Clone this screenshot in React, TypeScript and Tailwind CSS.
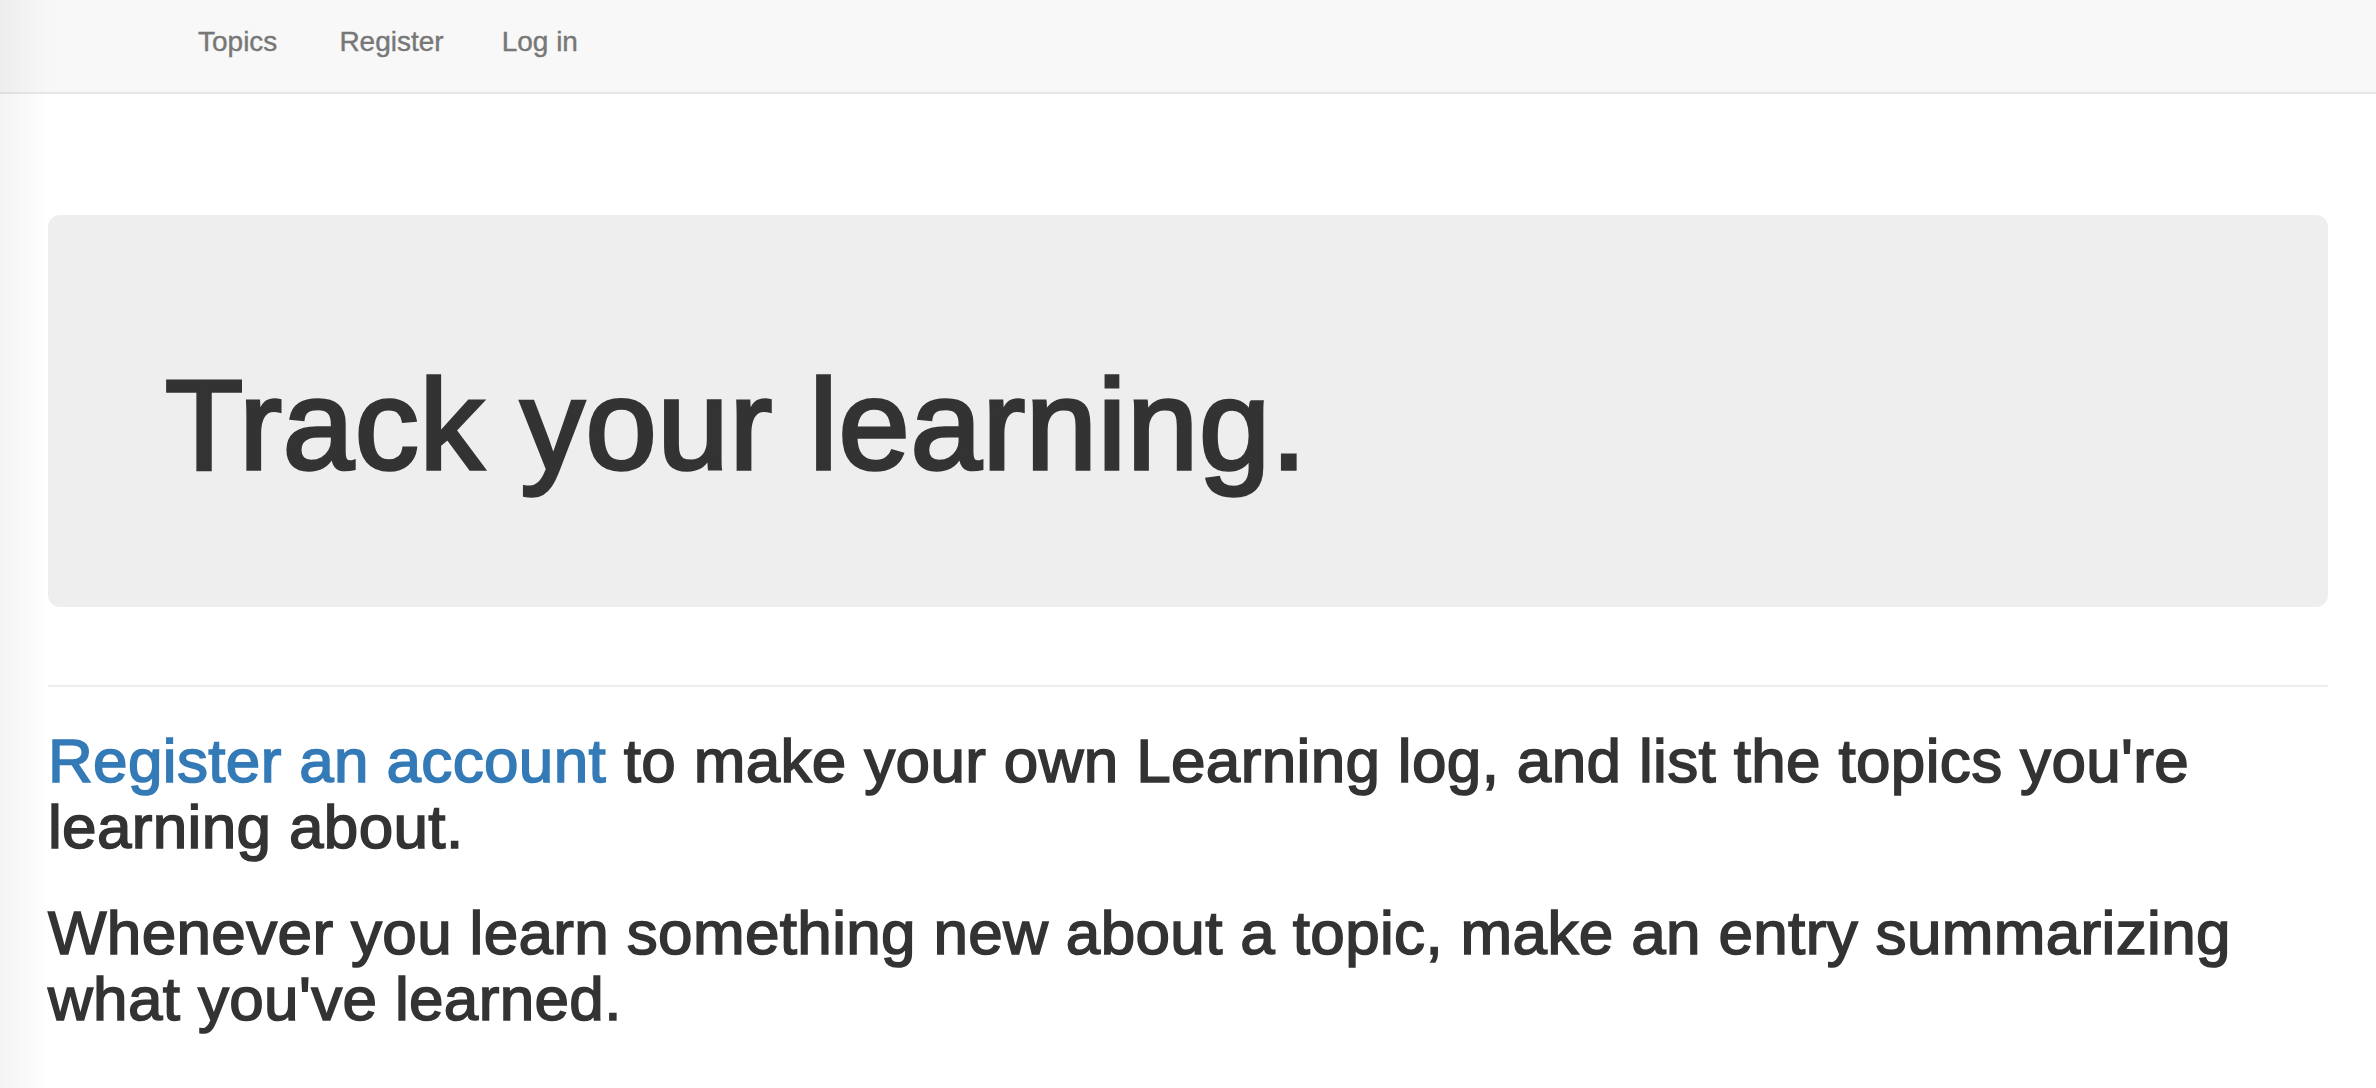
import React from "react";

export default function App() {
  return (
    <div className="relative min-h-screen bg-white text-[#333333] [font-family:'Liberation_Sans',Arial,sans-serif]">
      <nav className="h-[94px] bg-[#f8f8f8] border-b-2 border-[#e7e7e7]">
        <ul className="flex pl-[168px] pt-[26px] text-[28px] leading-[32px] text-[#777777] [-webkit-text-stroke:0.4px_#777777]">
          <li>
            <a href="#" className="block pl-[30px] pr-[31px]">Topics</a>
          </li>
          <li>
            <a href="#" className="block pl-[31px] pr-[29px]">Register</a>
          </li>
          <li>
            <a href="#" className="block pl-[29px] pr-[30px]">Log in</a>
          </li>
        </ul>
      </nav>

      <main className="px-[48px] pt-[121px] pb-[40px]">
        <div className="rounded-[12px] bg-[#eeeeee] pl-[117px] pt-[139px] pb-[112px]">
          <h1 className="text-[128px] leading-[141px] font-normal tracking-[0.8px] [-webkit-text-stroke:3.5px_#333333]">
            Track your learning.
          </h1>
        </div>

        <hr className="mt-[78px] border-0 border-t-2 border-[#eeeeee]" />

        <p className="mt-[41px] text-[62px] leading-[66px] tracking-[0.35px] [-webkit-text-stroke:1.6px_#333333]">
          <a href="#" className="text-[#337ab7] [-webkit-text-stroke:1.6px_#337ab7]">Register an account</a> to make your own Learning log, and list the topics you're learning about.
        </p>
        <p className="mt-[40px] text-[62px] leading-[66px] tracking-[0.35px] [-webkit-text-stroke:1.6px_#333333]">
          Whenever you learn something new about a topic, make an entry summarizing what you've learned.
        </p>
      </main>

      <div className="pointer-events-none absolute inset-y-0 left-0 w-[52px] bg-gradient-to-r from-[rgba(0,0,0,0.045)] to-transparent" />
    </div>
  );
}
